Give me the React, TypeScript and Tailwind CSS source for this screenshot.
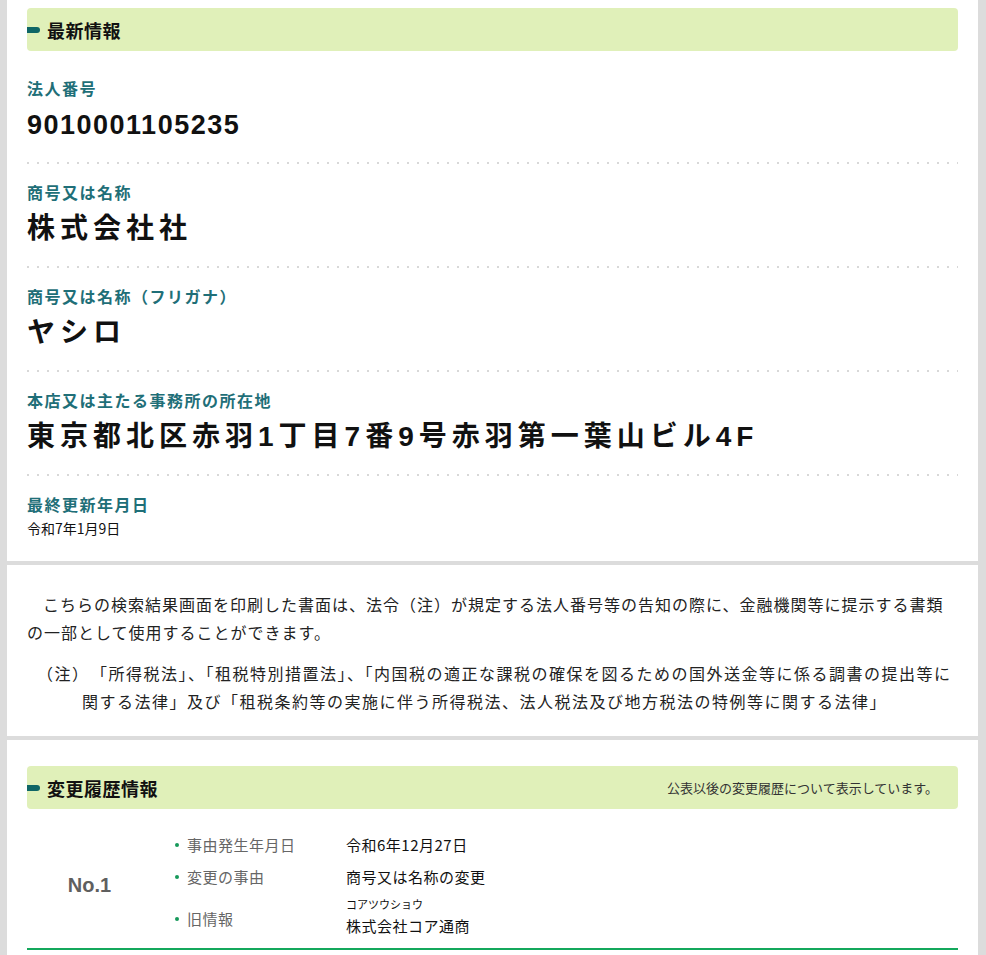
import React from 'react';

const FONT = '[font-family:"Noto_Sans_CJK_JP","Noto_Sans",sans-serif]';
const VALUE_FONT = '[font-family:"Liberation_Sans","Noto_Sans_CJK_JP",sans-serif]';

const SectionHeader: React.FC<{ title: string; note?: string }> = ({ title, note }) => (
  <div className="flex items-center justify-between h-[43px] rounded-[4px] bg-[#e0f0b9] pr-5">
    <h2 className="flex items-center gap-[7px] text-[18px] font-bold text-[#111] tracking-[0.5px] leading-none">
      <span className="block w-[13px] h-[6px] rounded-r-full bg-[#0f6666]"></span>
      {title}
    </h2>
    {note && <span className="text-[13px] text-[#333] leading-none">{note}</span>}
  </div>
);

const Dots = () => (
  <div className="h-[2px] bg-[linear-gradient(to_right,#d8d8d8_2px,transparent_2px)] bg-size-[10px_2px] bg-repeat-x"></div>
);

interface Item {
  label: string;
  value: string;
  number?: boolean;
}

const items: Item[] = [
  { label: '法人番号', value: '9010001105235', number: true },
  { label: '商号又は名称', value: '株式会社社' },
  { label: '商号又は名称（フリガナ）', value: 'ヤシロ' },
  { label: '本店又は主たる事務所の所在地', value: '東京都北区赤羽1丁目7番9号赤羽第一葉山ビル4F' },
];

const history = [
  { label: '事由発生年月日', value: '令和6年12月27日' },
  { label: '変更の事由', value: '商号又は名称の変更' },
];

export default function App() {
  return (
    <div className={`min-h-[955px] bg-[#dcdcdc] pl-[7px] pr-[8px] flex flex-col gap-[4px] ${FONT}`}>
      {/* 最新情報 */}
      <section className="bg-white px-5 pt-2 pb-[23px]">
        <SectionHeader title="最新情報" />
        <div className="pt-[9px]">
          {items.map((it) => (
            <div key={it.label}>
              <div className="pt-[17px] pb-[17px]">
                <div className="text-[16px] leading-[22px] font-bold text-[#1f6f78] tracking-[1.5px]">{it.label}</div>
                <div
                  className={`mt-[6px] leading-[40px] font-bold text-[#111] ${VALUE_FONT} ${
                    it.number ? 'text-[27px] tracking-[1.5px]' : 'text-[28px] tracking-[5px]'
                  }`}
                >
                  {it.value}
                </div>
              </div>
              <Dots />
            </div>
          ))}
          <div className="pt-[17px]">
            <div className="text-[16px] leading-[22px] font-bold text-[#1f6f78] tracking-[1.5px]">最終更新年月日</div>
            <div className="mt-[3px] text-[14px] leading-[20px] text-[#111]">令和7年1月9日</div>
          </div>
        </div>
      </section>

      {/* 注意書き */}
      <section className="bg-white px-5 pt-[25px] pb-[21px] text-[16px] leading-[28px] text-[#222] tracking-[1px]">
        <p className="indent-[1em] mb-[13px]">
          こちらの検索結果画面を印刷した書面は、法令（注）が規定する法人番号等の告知の際に、金融機関等に提示する書類の一部として使用することができます。
        </p>
        <p className="pl-[55px] -indent-[45px] tracking-[1.5px]">
          （注）　「所得税法」、「租税特別措置法」、「内国税の適正な課税の確保を図るための国外送金等に係る調書の提出等に
          <br />
          関する法律」及び「租税条約等の実施に伴う所得税法、法人税法及び地方税法の特例等に関する法律」
        </p>
      </section>

      {/* 変更履歴情報 */}
      <section className="flex-1 bg-white px-5 pt-[26px]">
        <SectionHeader title="変更履歴情報" note="公表以後の変更履歴について表示しています。" />
        <div className="flex items-center pt-[25px] pb-[12px]">
          <div className="w-[125px] text-center text-[20px] font-bold text-[#5f5f5f] [font-family:'Liberation_Sans',sans-serif]">
            No.1
          </div>
          <div className="ml-[18px] flex flex-col gap-[10px] flex-1">
            {history.map((h) => (
              <div key={h.label} className="flex items-center leading-[22px]">
                <div className="w-[176px] flex items-center text-[15px] text-[#666] tracking-[0.5px]">
                  <span className="ml-[5px] mr-[8px] w-[4px] h-[4px] rounded-full bg-[#16995a]"></span>
                  {h.label}
                </div>
                <div className="text-[15px] text-[#111] tracking-[0.5px]">{h.value}</div>
              </div>
            ))}
            <div className="flex items-center -mt-[1px]">
              <div className="w-[176px] pt-[5px] flex items-center text-[15px] leading-[22px] text-[#666] tracking-[0.5px]">
                <span className="ml-[5px] mr-[8px] w-[4px] h-[4px] rounded-full bg-[#16995a]"></span>
                旧情報
              </div>
              <div className="flex flex-col">
                <span className="text-[11px] leading-[14px] text-[#111]">コアツウショウ</span>
                <span className="mt-[5px] text-[15px] leading-[20px] text-[#111] tracking-[0.5px]">株式会社コア通商</span>
              </div>
            </div>
          </div>
        </div>
        <div className="h-[2px] bg-[#14a85c]"></div>
      </section>
    </div>
  );
}
